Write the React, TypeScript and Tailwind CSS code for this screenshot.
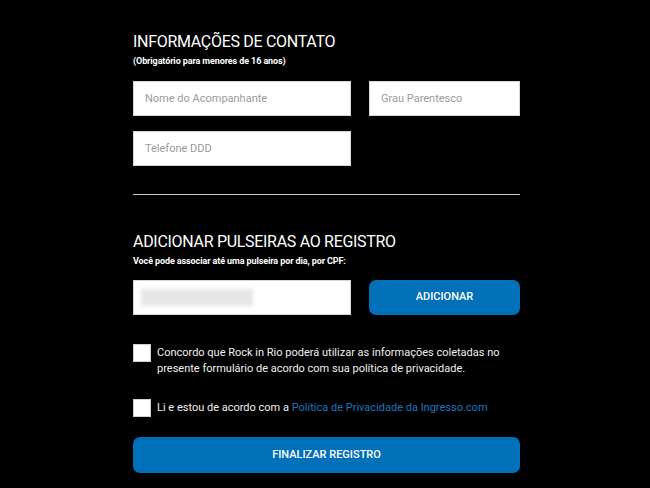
import { useState } from 'react';

function Field({ placeholder }: { placeholder: string }) {
  return (
    <input
      type="text"
      placeholder={placeholder}
      className="h-[35px] w-full border border-[#d6d6d6] bg-white px-[11px] text-[11px] text-[#555] placeholder:text-[#9a9a9a] outline-none"
    />
  );
}

function Check({ checked, onChange, children }: { checked: boolean; onChange: () => void; children: React.ReactNode }) {
  return (
    <label className="flex items-start gap-[6px] cursor-pointer">
      <span
        onClick={onChange}
        className={`h-[18px] w-[18px] shrink-0 border border-[#cfcfcf] ${checked ? 'bg-[#0070b8]' : 'bg-white'}`}
      />
      <span className="pt-[1px] text-[11px] leading-[16px] text-[#f0f0f0]">{children}</span>
    </label>
  );
}

export default function App() {
  const [terms, setTerms] = useState(false);
  const [privacy, setPrivacy] = useState(false);

  return (
    <div className="min-h-[488px] bg-black pl-[133px] pt-[32px] font-['Roboto',sans-serif]">
      <div className="w-[387px]">
        <h2 className="text-[16px] leading-[20px] tracking-[-0.3px] text-white">INFORMAÇÕES DE CONTATO</h2>
        <p className="mt-[4px] text-[9px] font-bold leading-[11px] tracking-[-0.1px] text-white">
          (Obrigatório para menores de 16 anos)
        </p>

        <div className="mt-[14px] grid grid-cols-[218px_151px] gap-x-[18px] gap-y-[15px]">
          <Field placeholder="Nome do Acompanhante" />
          <Field placeholder="Grau Parentesco" />
          <Field placeholder="Telefone DDD" />
        </div>

        <hr className="mt-[28px] border-0 border-t border-[#cfcfcf]" />

        <h2 className="mt-[37px] text-[16px] leading-[20px] tracking-[-0.3px] text-white">
          ADICIONAR PULSEIRAS AO REGISTRO
        </h2>
        <p className="mt-[4px] text-[9px] font-bold leading-[11px] tracking-[-0.1px] text-white">
          Você pode associar até uma pulseira por dia, por CPF:
        </p>

        <div className="mt-[13px] grid grid-cols-[218px_151px] gap-x-[18px]">
          <div className="flex h-[35px] items-center border border-[#d6d6d6] bg-white px-[7px]">
            <div className="h-[17px] w-[112px] bg-[#e6e6e6] blur-[2px]" />
          </div>
          <button className="h-[35px] rounded-[7px] bg-[#0070b8] text-[11px] font-medium text-white">
            ADICIONAR
          </button>
        </div>

        <div className="mt-[29px] flex flex-col gap-[22px]">
          <Check checked={terms} onChange={() => setTerms(!terms)}>
            Concordo que Rock in Rio poderá utilizar as informações coletadas no presente formulário de acordo com sua
            política de privacidade.
          </Check>
          <Check checked={privacy} onChange={() => setPrivacy(!privacy)}>
            Li e estou de acordo com a{' '}
            <a href="#" className="text-[#1b75bc]">
              Política de Privacidade da Ingresso.com
            </a>
          </Check>
        </div>

        <button className="mt-[20px] h-[36px] w-full rounded-[7px] bg-[#0070b8] text-[11px] font-medium text-white">
          FINALIZAR REGISTRO
        </button>
      </div>
    </div>
  );
}
